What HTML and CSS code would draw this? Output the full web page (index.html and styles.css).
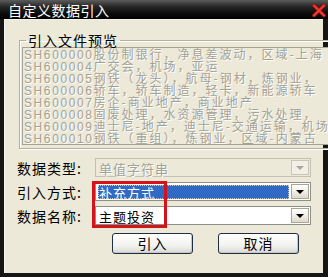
FILE: index.html
```html
<!DOCTYPE html>
<html lang="zh-CN">
<head>
	<meta charset="UTF-8">
	<title>自定义数据引入</title>
	<link rel="stylesheet" href="styles.css">
</head>
<body>
	<div class="win">
		<div class="titlebar">
			<span class="title">自定义数据引入</span>
			<svg class="close" width="14" height="13" viewBox="0 0 14 13">
				<path d="M2 1.5L12 11.5M12 1.5L2 11.5" stroke="#7a0c0c" stroke-width="4" stroke-linecap="round"/>
				<path d="M2 1.5L12 11.5M12 1.5L2 11.5" stroke="#ef3a30" stroke-width="2.4" stroke-linecap="round"/>
			</svg>
		</div>
		<div class="client">
			<fieldset class="group">
				<legend>引入文件预览</legend>
				<div class="preview">
					<div class="line"><span class="code">SH600000</span>股份制银行，净息差波动，区域-上海</div>
					<div class="line"><span class="code">SH600004</span>广交会，机场，亚运</div>
					<div class="line"><span class="code">SH600005</span>钢铁（龙头），航母-钢材，炼钢业，</div>
					<div class="line"><span class="code">SH600006</span>轿车，轿车制造，轻卡，新能源轿车</div>
					<div class="line"><span class="code">SH600007</span>房企-商业地产，商业地产</div>
					<div class="line"><span class="code">SH600008</span>固废处理，水资源管理，污水处理，</div>
					<div class="line"><span class="code">SH600009</span>迪士尼-地产，迪士尼-交通运输，机场</div>
					<div class="line"><span class="code">SH600010</span>钢铁（重组），炼钢业，区域-内蒙古</div>
				</div>
			</fieldset>

			<div class="rows">
				<div class="row">
					<span class="label">数据类型:</span>
					<div class="combo disabled">
						<span class="value">单值字符串</span>
						<span class="drop"><i class="arrow"></i></span>
					</div>
				</div>
				<div class="row">
					<span class="label">引入方式:</span>
					<div class="combo">
						<span class="value selected">补充方式</span>
						<span class="drop"><i class="arrow"></i></span>
					</div>
				</div>
				<div class="row">
					<span class="label">数据名称:</span>
					<div class="combo">
						<span class="value">主题投资</span>
						<span class="drop"><i class="arrow"></i></span>
					</div>
				</div>
			</div>

			<div class="buttons">
				<button class="btn">引入</button>
				<button class="btn">取消</button>
			</div>

			<div class="mark"></div>
		</div>
	</div>
</body>
</html>
```

FILE: styles.css
```css
* {
    margin: 0;
    padding: 0;
    box-sizing: border-box;
}

body {
    width: 328px;
    height: 277px;
    overflow: hidden;
    background: #101010;
    font-family: "Noto Sans CJK SC", "Liberation Sans", sans-serif;
}

.win {
    width: 328px;
    height: 277px;
    display: flex;
    flex-direction: column;
    background: #151515;
}

.titlebar {
    height: 19px;
    display: flex;
    align-items: center;
    justify-content: space-between;
    padding: 0 2px 0 8px;
    background: linear-gradient(#5c5c5c, #262626 35%, #0c0c0c 70%, #000);
}

.title {
    color: #fff;
    font-size: 14px;
    line-height: 16px;
    letter-spacing: 0.5px;
}

.close {
    display: block;
    margin-top: 1px;
}

.client {
    flex: 1;
    margin: 0 5px 4px 4px;
    position: relative;
    background: #ece9d8;
    border-left: 1px solid #f6f5ef;
    border-top: 1px solid #f3f1e8;
}

.group {
    margin: 13px 8px 0 14px;
    padding: 0 2px 3px 2px;
    border: 1px solid #b4b0a0;
    box-shadow: 1px 1px 0 #fff, inset 1px 1px 0 #fff;
}

.group legend {
    margin-left: 4px;
    padding: 0 2px;
    font-size: 14px;
    line-height: 14px;
    letter-spacing: 1px;
    color: #000;
}

.preview {
    border: 1px solid #a5a294;
    background: #ece9d8;
    overflow: hidden;
    color: #a3a194;
    font-size: 12px;
    line-height: 12px;
    letter-spacing: 2px;
    text-shadow: 1px 1px 0 #fff;
    padding-left: 1px;
}

.line {
    height: 12px;
    white-space: nowrap;
}

.code {
    font-family: "Liberation Sans", sans-serif;
    font-size: 12px;
    letter-spacing: 1.6px;
}

.rows {
    margin-top: 9px;
    padding-left: 12px;
    display: flex;
    flex-direction: column;
    gap: 5px;
}

.row {
    display: flex;
    align-items: center;
}

.label {
    width: 78px;
    font-size: 14px;
    letter-spacing: 1px;
    line-height: 16px;
    color: #000;
}

.combo {
    width: 216px;
    height: 19px;
    display: flex;
    padding: 1px;
    border: 1px solid #8e8e8a;
    background: #fff;
}

.combo.disabled {
    border-color: #c4c1b2;
    background: #ece9d8;
}

.value {
    flex: 1;
    margin: 1px 2px 0 1px;
    padding-left: 1px;
    font-size: 13px;
    line-height: 15px;
    letter-spacing: 1px;
    color: #000;
}

.disabled .value {
    color: #a3a194;
    text-shadow: 1px 1px 0 #fff;
}

.value.selected {
    background: #316ac5;
    color: #fff;
    outline: 1px dotted #c8c8c8;
    outline-offset: -1px;
}

.drop {
    width: 18px;
    display: flex;
    align-items: center;
    justify-content: center;
    border: 1px solid #a9a698;
    background: linear-gradient(#ffffff, #f0efe8 50%, #dcd9cb);
}

.arrow {
    width: 0;
    height: 0;
    border-left: 4px solid transparent;
    border-right: 4px solid transparent;
    border-top: 4px solid #000;
}

.disabled .drop {
    border-color: #c9c6b8;
    background: #f2f0e6;
}

.disabled .arrow {
    border-top-color: #a9a79b;
}

.buttons {
    margin-top: 8px;
    padding-left: 107px;
    display: flex;
    gap: 25px;
}

.btn {
    width: 81px;
    height: 21px;
    border: 1px solid #1f2d45;
    border-radius: 3px;
    background: linear-gradient(#ffffff, #f2f2ef 60%, #d8d8d4);
    box-shadow: inset -1px -1px 0 #c8c8c0;
    font-family: "Noto Sans CJK SC", sans-serif;
    font-size: 14px;
    line-height: 17px;
    letter-spacing: 1px;
    color: #000;
}

.mark {
    position: absolute;
    left: 87px;
    top: 161px;
    width: 75px;
    height: 47px;
    border: 3px solid #d3141a;
}
```
